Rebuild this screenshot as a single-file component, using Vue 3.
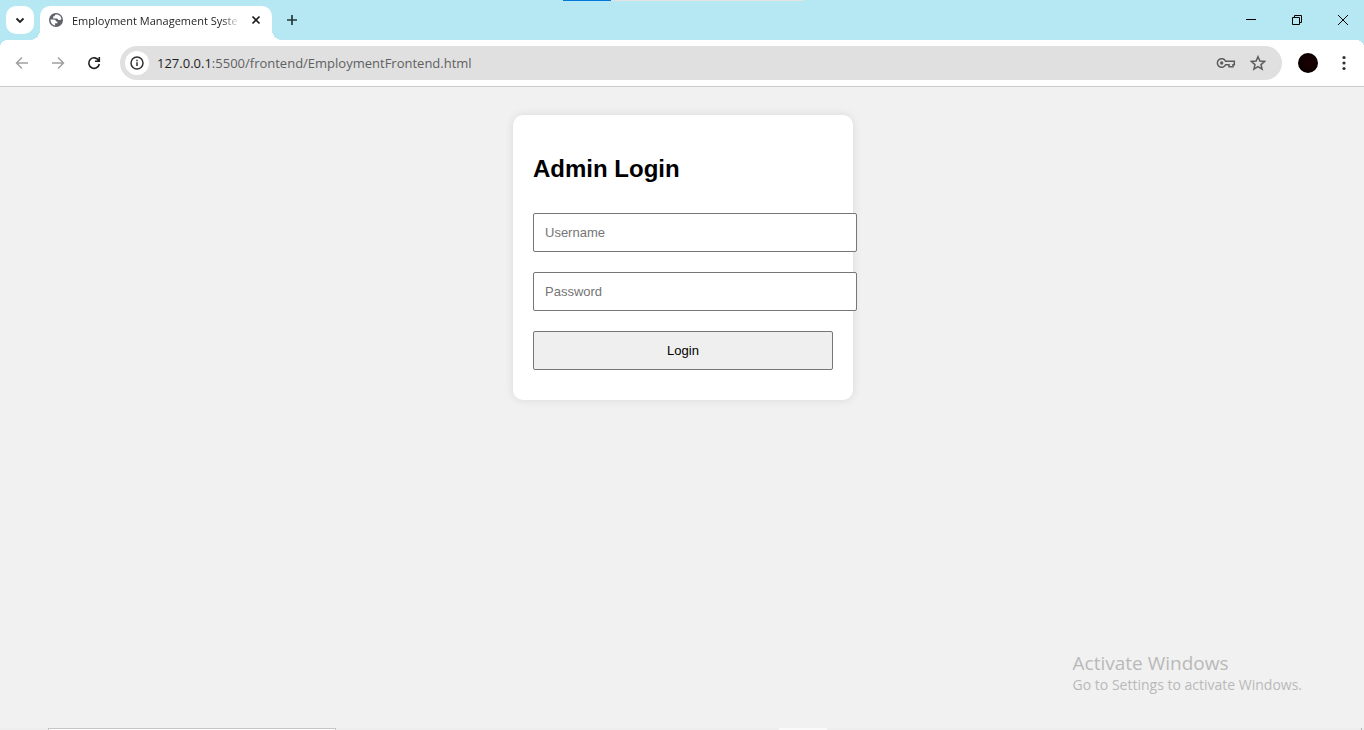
<script setup>
import { ref } from 'vue'

const username = ref('')
const password = ref('')
const address = {
  host: '127.0.0.1',
  path: ':5500/frontend/EmploymentFrontend.html',
}
</script>

<template>
  <div class="screen">
    <header class="titlebar">
      <div class="share-strip"></div>
      <button class="tab-search" aria-label="Search tabs">
        <svg width="28" height="28" viewBox="0 0 28 28"><path d="M10.5 12.500l3.500 3.500 3.500-3.500" fill="none" stroke="#1f1f1f" stroke-width="1.800" /></svg>
      </button>
      <div class="tab">
        <svg class="globe" width="14" height="14" viewBox="0 0 14 14">
          <circle cx="7" cy="7" r="7" fill="#5f6368" />
          <path d="M8.300 1.500C6.500 1.300 5.600 2 5.600 3.300H4.200v2.200h3.300c1.300 0 1.700.8 1.700 1.500h1.300c.5 0 .9-.2 1.900-.8 0-2-1.400-4-4.100-4.700zM1.500 6.500h3.200c1.600 0 2.300.7 2.300 2.100h1.400v1.600H6.100v2.300C3.300 12.100 1.400 9.500 1.500 6.500z" fill="#fff" />
        </svg>
        <span class="tab-title">Employment Management Syste</span>
        <button class="tab-close" aria-label="Close tab">
          <svg width="16" height="16" viewBox="0 0 16 16"><path d="M4.500 4.500l7 7m0-7l-7 7" stroke="#1f1f1f" stroke-width="1.700" /></svg>
        </button>
      </div>
      <button class="new-tab" aria-label="New tab">
        <svg width="20" height="20" viewBox="0 0 20 20"><path d="M10 5v10M5 10h10" stroke="#26383c" stroke-width="1.700" /></svg>
      </button>
      <div class="window-controls">
        <button aria-label="Minimize"><svg width="10" height="10" viewBox="0 0 10 10"><path d="M0 4.500h10" stroke="#000" /></svg></button>
        <button aria-label="Restore"><svg width="10" height="10" viewBox="0 0 10 10"><path d="M.5 2.500h7v7h-7zM2.500 2.500v-2h7v7h-2" fill="none" stroke="#000" /></svg></button>
        <button aria-label="Close"><svg width="10" height="10" viewBox="0 0 10 10"><path d="M0 0l10 10M10 0L0 10" stroke="#000" /></svg></button>
      </div>
    </header>

    <nav class="toolbar">
      <button class="tool" aria-label="Back"><svg width="16" height="16" viewBox="0 0 16 16"><path d="M14 8H3M8 2.500L2.500 8 8 13.500" fill="none" stroke="#a0a0a0" stroke-width="1.500" /></svg></button>
      <button class="tool" aria-label="Forward"><svg width="16" height="16" viewBox="0 0 16 16"><path d="M2 8h11M8 2.500L13.500 8 8 13.500" fill="none" stroke="#a0a0a0" stroke-width="1.500" /></svg></button>
      <button class="tool" aria-label="Reload"><svg width="16" height="16" viewBox="0 0 16 16"><path d="M12.700 5.500A5.300 5.300 0 1 0 13.300 9M13.300 2v4.200H9" fill="none" stroke="#1f1f1f" stroke-width="1.600" /></svg></button>
      <div class="address">
        <button class="site-info" aria-label="View site information">
          <svg width="14" height="14" viewBox="0 0 14 14"><circle cx="7" cy="7" r="6" fill="none" stroke="#303030" stroke-width="1.500" /><path d="M7 6.300V10M7 3.800v1.500" stroke="#303030" stroke-width="1.500" /></svg>
        </button>
        <span class="url"><span class="host">{{ address.host }}</span>{{ address.path }}</span>
        <button class="address-action" aria-label="Manage passwords">
          <svg width="20" height="12" viewBox="0 0 20 12"><path d="M9.600 4.300A4.300 4.300 0 1 0 9.600 7.700H13v2h4v-2h1.300V4.300z" fill="none" stroke="#5c5c5c" stroke-width="1.500" /><circle cx="5.700" cy="6" r="1.700" fill="#5c5c5c" /></svg>
        </button>
        <button class="address-action" aria-label="Bookmark this page">
          <svg width="16" height="16" viewBox="0 0 16 16"><path d="M8 1.700l1.900 4.400 4.700.4-3.600 3.100 1.100 4.600L8 11.700l-4.100 2.500L5 9.600 1.400 6.500l4.700-.4z" fill="none" stroke="#5c5c5c" stroke-width="1.500" /></svg>
        </button>
      </div>
      <button class="profile" aria-label="Profile"></button>
      <button class="menu" aria-label="Menu">
        <svg width="4" height="16" viewBox="0 0 4 16"><g fill="#303030"><circle cx="2" cy="2.500" r="1.600" /><circle cx="2" cy="8" r="1.600" /><circle cx="2" cy="13.500" r="1.600" /></g></svg>
      </button>
    </nav>

    <main class="page">
      <form class="login" @submit.prevent>
        <h2>Admin Login</h2>
        <input v-model="username" type="text" placeholder="Username" aria-label="Username">
        <input v-model="password" type="password" placeholder="Password" aria-label="Password">
        <button type="submit">Login</button>
      </form>
    </main>

    <aside class="activation">
      <p class="activation-title">Activate Windows</p>
      <p class="activation-text">Go to Settings to activate Windows.</p>
    </aside>

    <footer class="taskbar">
      <div class="search-edge"></div>
      <div class="active-edge"></div>
      <div class="desktop-edge"></div>
    </footer>
  </div>
</template>

<style>
body {
  margin: 0;
}
</style>

<style scoped>
.screen {
  position: relative;
  display: flex;
  flex-direction: column;
  min-height: 100vh;
  overflow: hidden;
  background: #f1f1f1;
  font-family: "Open Sans", sans-serif;
}

button {
  padding: 0;
  border: 0;
  background: transparent;
  font-family: inherit;
}

svg {
  display: block;
}

.titlebar {
  position: relative;
  display: flex;
  height: 40px;
  background: #b5e8f2;
}

.share-strip {
  position: absolute;
  top: 0;
  left: 50%;
  width: 241px;
  height: 1px;
  margin-left: -119px;
  background: linear-gradient(to right, #0078d7 48px, #e3e3e3 48px);
}

.tab-search {
  width: 28px;
  height: 28px;
  margin: 6px 6px 0;
  border-radius: 10px;
  background: #fff;
}

.tab {
  position: relative;
  display: flex;
  align-items: center;
  box-sizing: border-box;
  width: 232px;
  height: 34px;
  margin-top: 6px;
  padding: 0 8px 6px 9px;
  border-radius: 10px 10px 0 0;
  background: #fff;
}

.tab::before,
.tab::after {
  position: absolute;
  bottom: 0;
  width: 10px;
  height: 10px;
  content: "";
}

.tab::before {
  right: 100%;
  background: radial-gradient(circle at 0 0, transparent 10px, #fff 10px);
}

.tab::after {
  left: 100%;
  background: radial-gradient(circle at 100% 0, transparent 10px, #fff 10px);
}

.tab-title {
  flex: 1;
  min-width: 0;
  margin: 0 8px 0 9px;
  padding-top: 2px;
  overflow: hidden;
  color: #1f1f1f;
  font-size: 11px;
  line-height: 18px;
  white-space: nowrap;
  mask-image: linear-gradient(to left, transparent, #000 18px);
}

.new-tab {
  width: 20px;
  height: 20px;
  margin: 10px 0 0 10px;
}

.window-controls {
  display: flex;
  margin-right: -2px;
  margin-left: auto;
}

.window-controls button {
  display: grid;
  width: 46px;
  place-items: center;
}

.toolbar {
  position: relative;
  display: flex;
  align-items: center;
  box-sizing: border-box;
  height: 47px;
  padding: 0 12px 0 4px;
  border-bottom: 1px solid #cacaca;
  background: #fff;
}

.toolbar::before,
.toolbar::after {
  position: absolute;
  top: 0;
  width: 8px;
  height: 8px;
  content: "";
}

.toolbar::before {
  left: 0;
  background: radial-gradient(circle at 100% 100%, transparent 8px, #b5e8f2 8px);
}

.toolbar::after {
  right: 0;
  background: radial-gradient(circle at 0 100%, transparent 8px, #b5e8f2 8px);
}

.tool {
  display: grid;
  width: 36px;
  height: 36px;
  place-items: center;
}

.address {
  display: flex;
  flex: 1;
  align-items: center;
  box-sizing: border-box;
  height: 34px;
  margin-left: 8px;
  padding: 0 12px 0 5px;
  border-radius: 17px;
  background: #e0e0e0;
}

.site-info {
  display: grid;
  width: 24px;
  height: 24px;
  border-radius: 50%;
  background: #fff;
  place-items: center;
}

.url {
  flex: 1;
  margin-left: 8px;
  color: #5f6062;
  font-size: 13px;
  line-height: 20px;
}

.host {
  color: #1f1f1f;
}

.address-action {
  display: grid;
  min-width: 24px;
  height: 24px;
  place-items: center;
}

.address-action + .address-action {
  margin-left: 8px;
}

.profile {
  width: 20px;
  height: 20px;
  margin-left: 16px;
  border-radius: 50%;
  background: radial-gradient(circle at 60% 50%, #1c0000, #080000 80%);
}

.menu {
  display: grid;
  width: 16px;
  height: 20px;
  margin-left: 18px;
  place-items: center;
}

.page {
  display: flex;
  flex: 1;
  align-items: flex-start;
  justify-content: center;
  padding: 28px 0 30px 2px;
  font-family: "Liberation Sans", Arial, sans-serif;
}

.login {
  width: 300px;
  padding: 20px;
  border-radius: 10px;
  background: #fff;
  box-shadow: 0 0 10px rgba(0, 0, 0, 0.1);
}

.login h2 {
  margin: 20px 0 30px;
  color: #000;
  font-size: 24px;
  line-height: 28px;
}

.login input,
.login button {
  display: block;
  box-sizing: content-box;
  width: 100%;
  height: 15px;
  margin: 0 0 20px;
  padding: 11px;
  border: 1px solid #767676;
  border-radius: 2px;
  font-family: inherit;
  font-size: 13px;
  line-height: 15px;
}

.login input {
  background: #fff;
  color: #000;
}

.login input::placeholder {
  color: #757575;
}

.login button {
  box-sizing: border-box;
  height: 39px;
  margin-bottom: 10px;
  background: #efefef;
  color: #000;
}

.activation {
  position: absolute;
  right: 62px;
  bottom: 35px;
  color: #b9b9b9;
}

.activation p {
  margin: 0;
  white-space: nowrap;
}

.activation-title {
  font-size: 19px;
  line-height: 24px;
}

.activation-text {
  font-size: 14px;
  line-height: 20px;
}

.taskbar {
  display: flex;
  align-items: flex-end;
  height: 2px;
  background: #eee;
}

.search-edge {
  box-sizing: border-box;
  width: 288px;
  height: 2px;
  margin-left: 48px;
  border: 1px solid #c5c5c5;
  border-bottom: 0;
  background: #fff;
}

.active-edge {
  width: 48px;
  height: 2px;
  margin-left: 443px;
  background: #fafafa;
}

.desktop-edge {
  width: 1px;
  height: 2px;
  margin: 0 2px 0 auto;
  background: #b5b5b5;
}
</style>
